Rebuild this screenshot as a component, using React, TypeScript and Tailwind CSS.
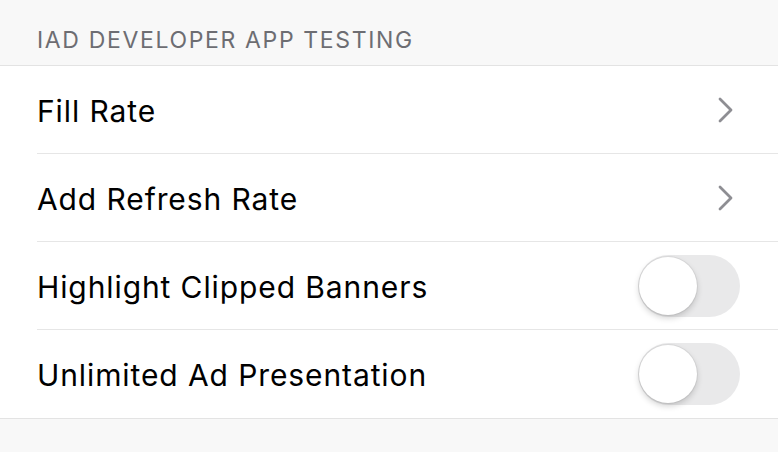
import React, { useState } from "react";

type Row =
  | { label: string; kind: "link" }
  | { label: string; kind: "toggle"; on: boolean };

const rows: Row[] = [
  { label: "Fill Rate", kind: "link" },
  { label: "Add Refresh Rate", kind: "link" },
  { label: "Highlight Clipped Banners", kind: "toggle", on: false },
  { label: "Unlimited Ad Presentation", kind: "toggle", on: false },
];

const Chevron = () => (
  <svg width="18" height="26" viewBox="0 0 18 26" fill="none" className="mr-[5px]">
    <path
      d="M3 2l11 11L3 24"
      stroke="#8e8e93"
      strokeWidth="2.8"
      strokeLinecap="round"
      strokeLinejoin="round"
    />
  </svg>
);

const Toggle = ({ initial }: { initial: boolean }) => {
  const [on, setOn] = useState(initial);
  return (
    <button
      onClick={() => setOn(!on)}
      className={`relative h-[62px] w-[102px] rounded-full transition-colors ${
        on ? "bg-[#4cd964]" : "bg-[#e9e9ea]"
      }`}
    >
      <span
        className={`absolute top-[2px] left-[1px] size-[58px] rounded-full bg-white shadow-[0_3px_6px_rgba(0,0,0,0.18),0_0_0_1px_rgba(0,0,0,0.05)] transition-transform ${
          on ? "translate-x-[42px]" : "translate-x-0"
        }`}
      />
    </button>
  );
};

export default function App() {
  return (
    <div
      className="h-[452px] w-[778px] overflow-hidden bg-[#f8f8f8]"
      style={{ fontFamily: "Inter, 'Liberation Sans', sans-serif" }}
    >
      <div className="flex h-[65px] items-end pb-[13px] pl-[37px]">
        <span className="text-[23px] leading-none tracking-[1.65px] text-[#6d6d72]">
          IAD DEVELOPER APP TESTING
        </span>
      </div>
      <div className="border-y border-[#e3e3e3] bg-white">
        {rows.map((row, i) => (
          <div key={row.label} className="pl-[37px]">
            <div
              className={`flex h-[88px] items-center justify-between pr-[38px] ${
                i < rows.length - 1 ? "border-b border-[#e6e6e6]" : ""
              }`}
            >
              <span className="pt-[3px] text-[30px] tracking-[0.9px] text-black">
                {row.label}
              </span>
              {row.kind === "link" ? (
                <Chevron />
              ) : (
                <Toggle initial={row.on} />
              )}
            </div>
          </div>
        ))}
      </div>
    </div>
  );
}
